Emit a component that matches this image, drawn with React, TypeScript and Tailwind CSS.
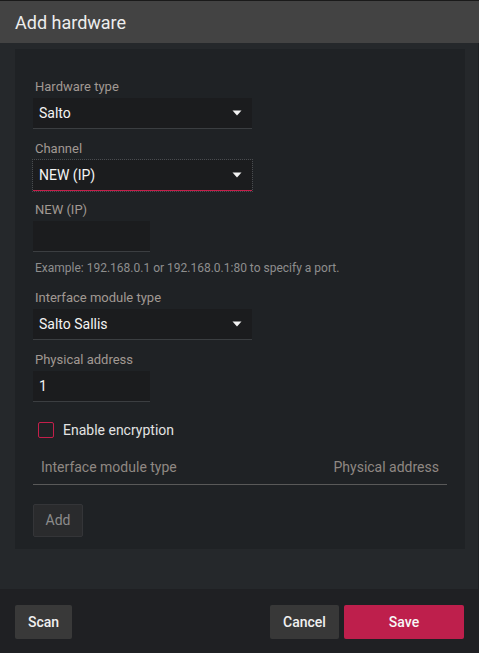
const labelCls = "block text-[13px] leading-[16px] text-[#a19993] pl-[2px]";

function Caret() {
  return (
    <svg width="10" height="6" viewBox="0 0 10 6" className="shrink-0">
      <path d="M0.5 0.5 L9.5 0.5 L5 5.5 Z" fill="#f2f2f2" />
    </svg>
  );
}

function SelectField({ label, value, focused, mt }: { label: string; value: string; focused?: boolean; mt: string }) {
  return (
    <div className={mt}>
      <span className={labelCls}>{label}</span>
      <div
        className={
          "mt-[3px] w-[219px] h-[31px] flex items-center justify-between pl-[6px] pr-[10px] bg-[#1b1c1e] border-b " +
          (focused ? "border-[#c41f4b] outline outline-1 outline-dotted outline-[#4a4c4f]" : "border-[#3b3e41]")
        }
      >
        <span className="text-[14px] text-[#f4f4f4]">{value}</span>
        <Caret />
      </div>
    </div>
  );
}

function InputField({ label, value, mt }: { label: string; value: string; mt: string }) {
  return (
    <div className={mt}>
      <span className={labelCls}>{label}</span>
      <div className="mt-[3px] w-[117px] h-[31px] flex items-center pl-[6px] bg-[#1b1c1e] border-b border-[#3b3e41]">
        <span className="text-[14px] text-[#f4f4f4]">{value}</span>
      </div>
    </div>
  );
}

export default function App() {
  return (
    <div
      className="w-[479px] h-[653px] flex flex-col bg-[#25282b] overflow-hidden"
      style={{ fontFamily: "Roboto, 'Liberation Sans', sans-serif" }}
    >
      {/* Header */}
      <div className="h-[43px] shrink-0 bg-[#434343] border-t border-[#1a1a1a] flex items-center pl-[15px]">
        <h1 className="text-[18px] text-[#ededed]">Add hardware</h1>
      </div>

      {/* Body */}
      <div className="flex-1 px-[15px] pt-[6px] border-r border-[#1e2023]">
        <div className="w-[450px] bg-[#1f2225] px-[18px] pt-[30px] pb-[12px]">
          <SelectField label="Hardware type" value="Salto" mt="mt-0" />
          <SelectField label="Channel" value="NEW (IP)" focused mt="mt-[12px]" />
          <InputField label="NEW (IP)" value="" mt="mt-[11px]" />
          <p className="mt-[8px] text-[12px] leading-[16px] text-[#8e8e8e] pl-[2px]">
            Example: 192.168.0.1 or 192.168.0.1:80 to specify a port.
          </p>
          <SelectField label="Interface module type" value="Salto Sallis" mt="mt-[14px]" />
          <InputField label="Physical address" value="1" mt="mt-[12px]" />

          <label className="mt-[20px] flex items-center gap-[9px] pl-[5px]">
            <span className="w-[16px] h-[16px] rounded-[2px] border border-[#c41f4b]" />
            <span className="text-[14px] leading-[16px] text-[#e2e2e2]">Enable encryption</span>
          </label>

          {/* Table header */}
          <div className="mt-[12px] h-[35px] flex items-center justify-between px-[8px] border-b border-[#595959]">
            <span className="text-[14px] text-[#8f8883]">Interface module type</span>
            <span className="text-[14px] text-[#8f8883]">Physical address</span>
          </div>

          <button className="mt-[19px] w-[50px] h-[33px] rounded-[2px] bg-[#2a2b2d] border border-[#343538] text-[14px] text-[#8c8c8c]">
            Add
          </button>
        </div>
      </div>

      {/* Footer */}
      <div className="h-[64px] shrink-0 bg-[#1f2023] flex items-start pt-[16px] px-[15px]">
        <button className="w-[57px] h-[34px] rounded-[2px] bg-[#393939] text-[14px] font-medium text-[#f0f0f0]">
          Scan
        </button>
        <div className="flex-1" />
        <button className="w-[69px] h-[34px] rounded-[2px] bg-[#383838] text-[14px] font-medium text-[#f0f0f0]">
          Cancel
        </button>
        <button className="ml-[5px] w-[120px] h-[34px] rounded-[2px] bg-[#be1f4c] text-[14px] font-medium text-[#f7f7f7]">
          Save
        </button>
      </div>
    </div>
  );
}
